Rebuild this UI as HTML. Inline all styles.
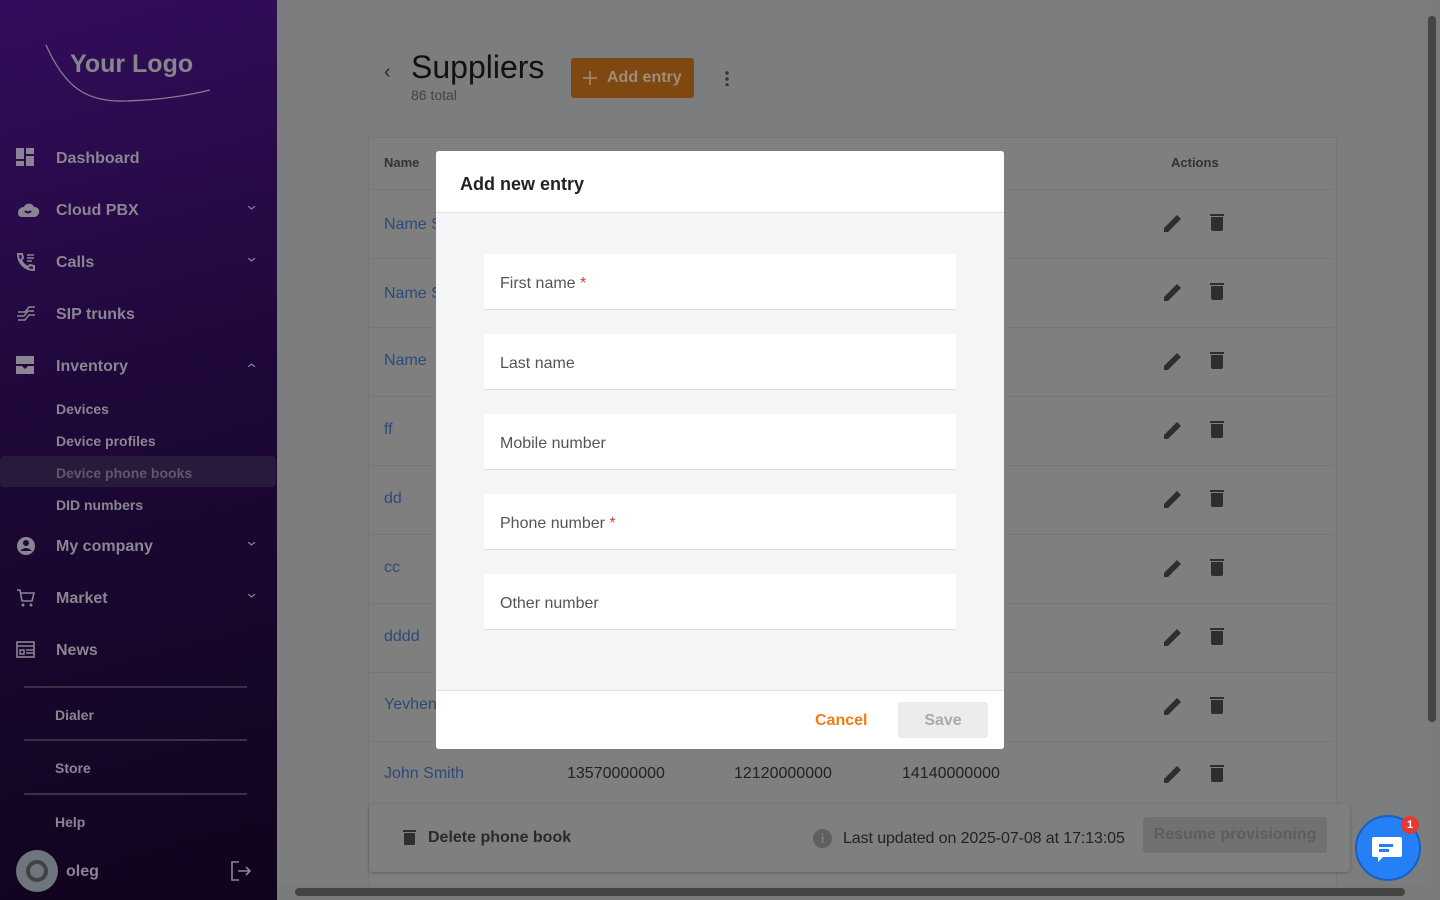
<!DOCTYPE html>
<html><head><meta charset="utf-8"><style>
*{box-sizing:border-box;margin:0;padding:0}
body{width:1440px;height:900px;overflow:hidden;font-family:"Liberation Sans",Arial,sans-serif;background:#7c7d7f;position:relative}
.sb{position:absolute;left:0;top:0;width:277px;height:900px;background:linear-gradient(165deg,#330d5c 0%,#1e0838 45%,#10041c 100%);color:#8a8592}
.it{position:absolute;left:0;width:277px;height:40px;display:flex;align-items:center;font-size:16px;font-weight:bold}
.it .ic{position:absolute;left:16px;width:20px;height:20px}
.it span{position:absolute;left:56px;top:12px}
.it .ch{position:absolute;left:248px;top:16px}
.sub{position:absolute;left:56px;font-size:14px;font-weight:bold}
.hr{position:absolute;left:24px;width:223px;height:2px;background:#3a2f48}
.card{position:absolute;left:368px;top:137px;width:969px;height:750px;background:#7f7f7f;border:1px solid #767676}
.row{position:absolute;left:0;width:967px;border-top:1px solid #777}
.nm{position:absolute;left:16px;color:#2c4a78;font-size:16px}
.modal{position:absolute;left:436px;top:151px;width:568px;height:598px;background:#f4f5f7;border-radius:3px;overflow:hidden}
.mh{height:62px;background:#fff;border-bottom:1px solid #e3e3e3;padding:23px 24px;font-size:18px;font-weight:bold;color:#222}
.fld{position:absolute;left:48px;width:472px;height:56px;background:#fff;border-bottom:1px solid #ddd;padding:21px 16px;font-size:16px;color:#555}
.fld b{color:#e53935;font-weight:normal}
.mf{position:absolute;left:0;top:539px;width:568px;height:59px;background:#fff;border-top:1px solid #e3e3e3}
</style></head><body>
<div class="sb">
<svg style="position:absolute;left:44px;top:40px" width="170" height="64"><path d="M2 5 C20 45 40 62 80 61 C120 60 150 54 166 50" stroke="#857a92" stroke-width="1.3" fill="none"/><text x="26" y="32" font-family="Liberation Sans" font-size="25" font-weight="bold" fill="#86858b">Your Logo</text></svg>
<div class="it" style="top:138px"><svg class="ic" viewBox="0 0 20 20"><rect x="0" y="0" width="8" height="11" fill="#8a8592"/><rect x="10" y="0" width="8" height="6" fill="#8a8592"/><rect x="10" y="8" width="8" height="10" fill="#8a8592"/><rect x="0" y="13" width="8" height="5" fill="#8a8592"/></svg><span>Dashboard</span></div>
<svg width="0" height="0" style="position:absolute"><defs><path id="dn" d="M0 0L3.5 3L7 0" stroke="#8a8592" stroke-width="1.2" fill="none"/></defs></svg>
<div class="it" style="top:190px"><svg class="ic" viewBox="0 0 24 20" style="width:24px"><path d="M2 13 C2 9 5 7 8 7 C9 3 16 2 18 7 C22 7 24 10 23 13 C22 16 20 17 18 17 H6 C3 17 2 15 2 13Z" fill="#8a8592"/><path d="M9 11 Q12 14 15 11" stroke="#2a0b4a" stroke-width="2" fill="none"/></svg><span>Cloud PBX</span><svg class="ch" width="8" height="5"><use href="#dn"/></svg></div>
<div class="it" style="top:242px"><svg class="ic" viewBox="0 0 20 20"><path d="M2 2 L6 2 L7 6 L5 8 C6 11 9 14 12 15 L14 13 L18 14 L18 18 C9 18 2 11 2 2Z" fill="none" stroke="#8a8592" stroke-width="2"/><path d="M11 3H18M11 6H18M11 9H16" stroke="#8a8592" stroke-width="1.5"/></svg><span>Calls</span><svg class="ch" width="8" height="5"><use href="#dn"/></svg></div>
<div class="it" style="top:294px"><svg class="ic" viewBox="0 0 20 20"><path d="M2 8H9L13 3H19M1 12H8L12 7H18M2 16H9L13 11H19" stroke="#8a8592" stroke-width="1.5" fill="none"/></svg><span>SIP trunks</span></div>
<div class="it" style="top:346px"><svg class="ic" viewBox="0 0 20 20"><rect x="0" y="0" width="18" height="8" fill="#8a8592"/><path d="M0 10H6L9 13L12 10H18V18H0Z" fill="#8a8592"/></svg><span>Inventory</span><svg class="ch" width="8" height="5" style="transform:scaleY(-1)"><use href="#dn"/></svg></div>
<div class="sub" style="top:401px">Devices</div>
<div class="sub" style="top:433px">Device profiles</div>
<div style="position:absolute;left:0;top:456px;width:276px;height:31px;background:#281a3a;border-radius:4px"></div>
<div class="sub" style="top:465px;color:#5f576a">Device phone books</div>
<div class="sub" style="top:497px">DID numbers</div>
<div class="it" style="top:526px"><svg class="ic" viewBox="0 0 20 20"><circle cx="10" cy="10" r="9" fill="#8a8592"/><circle cx="10" cy="7" r="3" fill="#1e0838"/><path d="M4 15 Q10 9 16 15" fill="#1e0838"/></svg><span>My company</span><svg class="ch" width="8" height="5"><use href="#dn"/></svg></div>
<div class="it" style="top:578px"><svg class="ic" viewBox="0 0 20 20"><path d="M1 2H4L6 13H16L18 5H5" stroke="#8a8592" stroke-width="1.6" fill="none"/><circle cx="7" cy="17" r="1.5" fill="#8a8592"/><circle cx="15" cy="17" r="1.5" fill="#8a8592"/></svg><span>Market</span><svg class="ch" width="8" height="5"><use href="#dn"/></svg></div>
<div class="it" style="top:630px"><svg class="ic" viewBox="0 0 20 20"><rect x="1" y="2" width="17" height="15" stroke="#8a8592" stroke-width="1.6" fill="none"/><path d="M1 6H18M10 10H18M10 13H18M4 10H8V14H4Z" stroke="#8a8592" stroke-width="1.5" fill="none"/></svg><span>News</span></div>
<div class="hr" style="top:686px"></div>
<div class="sub" style="top:707px;left:55px">Dialer</div>
<div class="hr" style="top:739px"></div>
<div class="sub" style="top:760px;left:55px">Store</div>
<div class="hr" style="top:793px"></div>
<div class="sub" style="top:814px;left:55px">Help</div>
<div style="position:absolute;left:16px;top:850px;width:42px;height:42px;border-radius:50%;background:#6e757c"></div>
<div style="position:absolute;left:26px;top:860px;width:22px;height:22px;border-radius:50%;border:4px solid #3f4247"></div>
<div style="position:absolute;left:66px;top:863px;font-size:16px;font-weight:bold">oleg</div>
<svg style="position:absolute;left:230px;top:861px" width="22" height="20" viewBox="0 0 22 20"><path d="M9 1H2V19H9M8 10H20M16 6L20 10L16 14" stroke="#8a8592" stroke-width="1.6" fill="none"/></svg>
</div>

<div style="position:absolute;left:384px;top:61px;font-size:20px;color:#2a2a2a">‹</div>
<div style="position:absolute;left:411px;top:49px;font-size:32px;color:#111">Suppliers</div>
<div style="position:absolute;left:411px;top:87px;font-size:14px;color:#444">86 total</div>
<div style="position:absolute;left:571px;top:58px;width:123px;height:40px;background:#7f4811;border-radius:3px;color:#a08c7a;font-size:16px;font-weight:bold;line-height:40px;padding-left:36px">Add entry</div>
<svg style="position:absolute;left:583px;top:71px" width="14" height="14"><path d="M7 0V14M0 7H14" stroke="#a08c7a" stroke-width="1.6"/></svg>
<div style="position:absolute;left:725px;top:70px;width:4px;height:16px;background:radial-gradient(circle,#333 1.5px,transparent 2px) 0 0/4px 6px"></div>

<div class="card">
<div style="position:absolute;left:15px;top:17px;font-size:13px;font-weight:bold;color:#333">Name</div>
<div style="position:absolute;left:802px;top:17px;font-size:13px;font-weight:bold;color:#333">Actions</div>
</div>
<div style="position:absolute;left:368px;top:189px;width:969px">
<div class="row" style="top:0;height:69px"><span class="nm" style="top:26px">Name S</span></div>
<div class="row" style="top:69px;height:69px"><span class="nm" style="top:26px">Name S</span></div>
<div class="row" style="top:138px;height:69px"><span class="nm" style="top:24px">Name</span></div>
<div class="row" style="top:207px;height:69px"><span class="nm" style="top:24px">ff</span></div>
<div class="row" style="top:276px;height:69px"><span class="nm" style="top:24px">dd</span></div>
<div class="row" style="top:345px;height:69px"><span class="nm" style="top:24px">cc</span></div>
<div class="row" style="top:414px;height:69px"><span class="nm" style="top:24px">dddd</span></div>
<div class="row" style="top:483px;height:69px"><span class="nm" style="top:23px">Yevhen</span></div>
<div class="row" style="top:552px;height:69px"><span class="nm" style="top:23px">John Smith</span><span style="position:absolute;left:199px;top:23px;font-size:16px;color:#222">13570000000</span><span style="position:absolute;left:366px;top:23px;font-size:16px;color:#222">12120000000</span><span style="position:absolute;left:534px;top:23px;font-size:16px;color:#222">14140000000</span></div>
</div>
<svg style="position:absolute;left:0;top:0" width="1440" height="900">
<g fill="#2e2e2e">
<g id="a"><path d="M1164 228 L1177 215 L1181 219 L1168 232 L1164 232Z"/><rect x="1210" y="214" width="14" height="2"/><path d="M1211 217H1223V229Q1223 231 1221 231H1213Q1211 231 1211 229Z"/></g>
<use href="#a" y="69"/><use href="#a" y="138"/><use href="#a" y="207"/><use href="#a" y="276"/><use href="#a" y="345"/><use href="#a" y="414"/><use href="#a" y="483"/><use href="#a" y="551"/>
</g></svg>

<div style="position:absolute;left:369px;top:804px;width:981px;height:68px;background:#7f7f7f;border-radius:4px;box-shadow:0 1px 3px rgba(0,0,0,.25)"></div>
<svg style="position:absolute;left:403px;top:829px" width="14" height="17"><rect x="0" y="1" width="13" height="2" fill="#2e2e2e"/><rect x="1" y="4" width="11" height="12" rx="1" fill="#2e2e2e"/></svg>
<div style="position:absolute;left:428px;top:829px;font-size:16px;font-weight:bold;color:#2a2a2a">Delete phone book</div>
<div style="position:absolute;left:813px;top:829px;width:19px;height:19px;border-radius:50%;background:#5f5f5f;color:#7f7f7f;font-size:13px;font-weight:bold;text-align:center;line-height:19px">i</div>
<div style="position:absolute;left:843px;top:830px;font-size:16px;color:#222;letter-spacing:-0.1px">Last updated on 2025-07-08 at 17:13:05</div>
<div style="position:absolute;left:1143px;top:817px;width:184px;height:36px;background:#717171;border-radius:3px;color:#5d5d5d;font-size:16px;font-weight:bold;text-align:center;line-height:35px">Resume provisioning</div>

<div style="position:absolute;left:1355px;top:815px;width:66px;height:66px;border-radius:50%;background:#2680f5;border:2px solid #1a5fc0"></div>
<svg style="position:absolute;left:1371px;top:835px" width="34" height="30"><path d="M3 2H29Q31 2 31 4V20Q31 22 29 22H12L7 27V22H3Q1 22 1 20V4Q1 2 3 2Z" fill="#fff"/><rect x="8" y="9" width="14" height="3" fill="#2680f5"/><rect x="8" y="14" width="10" height="3" fill="#2680f5"/></svg>
<div style="position:absolute;left:1401px;top:816px;width:18px;height:18px;border-radius:50%;background:#e53935;color:#fff;font-size:11px;font-weight:bold;text-align:center;line-height:18px">1</div>

<div style="position:absolute;left:1425px;top:0;width:15px;height:900px;background:#7a7b7d"></div>
<div style="position:absolute;left:1428px;top:16px;width:8px;height:706px;background:#444;border-radius:4px"></div>
<div style="position:absolute;left:277px;top:885px;width:1148px;height:15px;background:#7a7b7d"></div>
<div style="position:absolute;left:295px;top:888px;width:1110px;height:8px;background:#444;border-radius:4px"></div>

<div class="modal">
<div class="mh">Add new entry</div>
<div class="fld" style="top:103px">First name <b>*</b></div>
<div class="fld" style="top:183px">Last name</div>
<div class="fld" style="top:263px">Mobile number</div>
<div class="fld" style="top:343px">Phone number <b>*</b></div>
<div class="fld" style="top:423px">Other number</div>
<div class="mf">
<div style="position:absolute;left:379px;top:21px;font-size:16px;font-weight:bold;color:#f07c14">Cancel</div>
<div style="position:absolute;left:462px;top:11px;width:90px;height:36px;background:#ececec;border-radius:3px;color:#aaa;font-size:16px;font-weight:bold;text-align:center;line-height:37px">Save</div>
</div>
</div>
</body></html>
